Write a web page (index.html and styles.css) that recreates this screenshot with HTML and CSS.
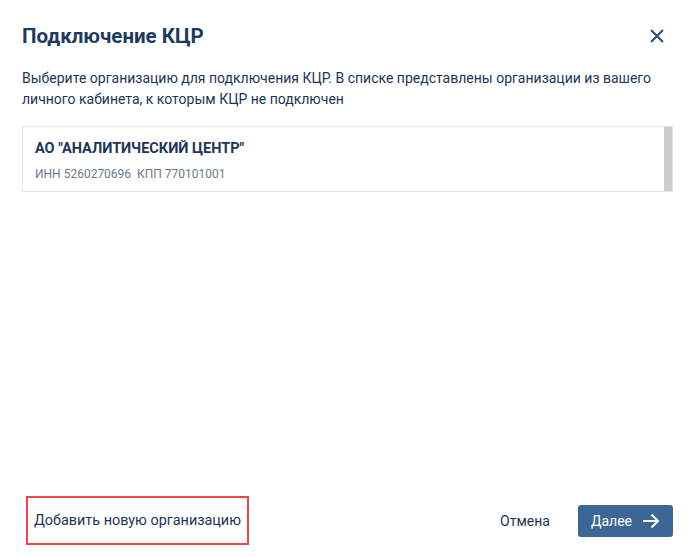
FILE: index.html
```html
<!DOCTYPE html>
<html lang="ru">
  <head>
    <meta charset="UTF-8" />
    <title>Подключение КЦР</title>
    <link rel="stylesheet" href="styles.css">
  </head>
  <body>
    <div class="modal">
      <div class="modal-header">
        <h2>Подключение КЦР</h2>
        <button class="closeBtn" aria-label="Закрыть">
          <svg width="14" height="14" viewBox="0 0 14 14">
            <path d="M1 1 L13 13 M13 1 L1 13" stroke="#2b4a70" stroke-width="2" fill="none" />
          </svg>
        </button>
      </div>

      <p class="description">
        Выберите организацию для подключения КЦР. В списке представлены организации из вашего
        личного кабинета, к которым КЦР не подключен
      </p>

      <div class="orgList">
        <div class="orgItems">
          <div class="orgItem">
            <div class="orgName">АО "АНАЛИТИЧЕСКИЙ ЦЕНТР"</div>
            <div class="orgDetails">ИНН 5260270696&nbsp; КПП 770101001</div>
          </div>
        </div>
        <div class="scrollbar"></div>
      </div>

      <div class="modal-footer">
        <a class="addLink" href="#">Добавить новую организацию</a>
        <div class="actions">
          <button class="cancelBtn">Отмена</button>
          <button class="nextBtn">
            Далее
            <svg width="18" height="16" viewBox="0 0 18 16">
              <path d="M1 8 H16 M9.5 1.5 L16 8 L9.5 14.5" stroke="#ffffff" stroke-width="2" fill="none" />
            </svg>
          </button>
        </div>
      </div>
    </div>
  </body>
</html>
```

FILE: styles.css
```css
body {
  margin: 0;
  background: #ffffff;
  font-family: Roboto, "Liberation Sans", sans-serif;
  color: #1d3557;
}

.modal {
  width: 695px;
  height: 558px;
  box-sizing: border-box;
  padding: 24px 22px 13px 22px;
  display: flex;
  flex-direction: column;
}

.modal-header {
  display: flex;
  justify-content: space-between;
  align-items: center;
}

h2 {
  margin: 0;
  font-size: 20.5px;
  font-weight: bold;
  color: #1d3a5f;
}

.closeBtn {
  border: none;
  background: none;
  padding: 0;
  margin-right: 9px;
  cursor: pointer;
  display: flex;
}

.description {
  margin: 20px 0 16px 0;
  font-size: 14px;
  line-height: 21px;
  color: #1d3557;
}

.orgList {
  display: flex;
  border: 1px solid #e1e5ea;
  height: 64px;
}

.orgItems {
  flex: 1;
}

.orgItem {
  padding: 13px 12px;
}

.orgName {
  font-size: 14.5px;
  font-weight: bold;
  color: #1d3557;
}

.orgDetails {
  margin-top: 10px;
  font-size: 12px;
  color: #6b7a8e;
}

.scrollbar {
  width: 8px;
  background: #cdcdcd;
}

.modal-footer {
  margin-top: auto;
  display: flex;
  justify-content: space-between;
  align-items: center;
}

.addLink {
  margin-left: 4px;
  padding: 14px 6px 14px 6px;
  border: 2px solid #f24444;
  font-size: 14.4px;
  color: #1d3557;
  text-decoration: none;
}

.actions {
  display: flex;
  align-items: center;
  gap: 28px;
}

.cancelBtn {
  border: none;
  background: none;
  padding: 0;
  font-family: inherit;
  font-size: 14px;
  color: #1d3557;
  cursor: pointer;
}

.nextBtn {
  display: flex;
  align-items: center;
  gap: 10px;
  height: 32px;
  padding: 0 13px;
  border: none;
  border-radius: 3px;
  background: #3a6796;
  color: white;
  font-family: inherit;
  font-size: 14px;
  cursor: pointer;
}
```
